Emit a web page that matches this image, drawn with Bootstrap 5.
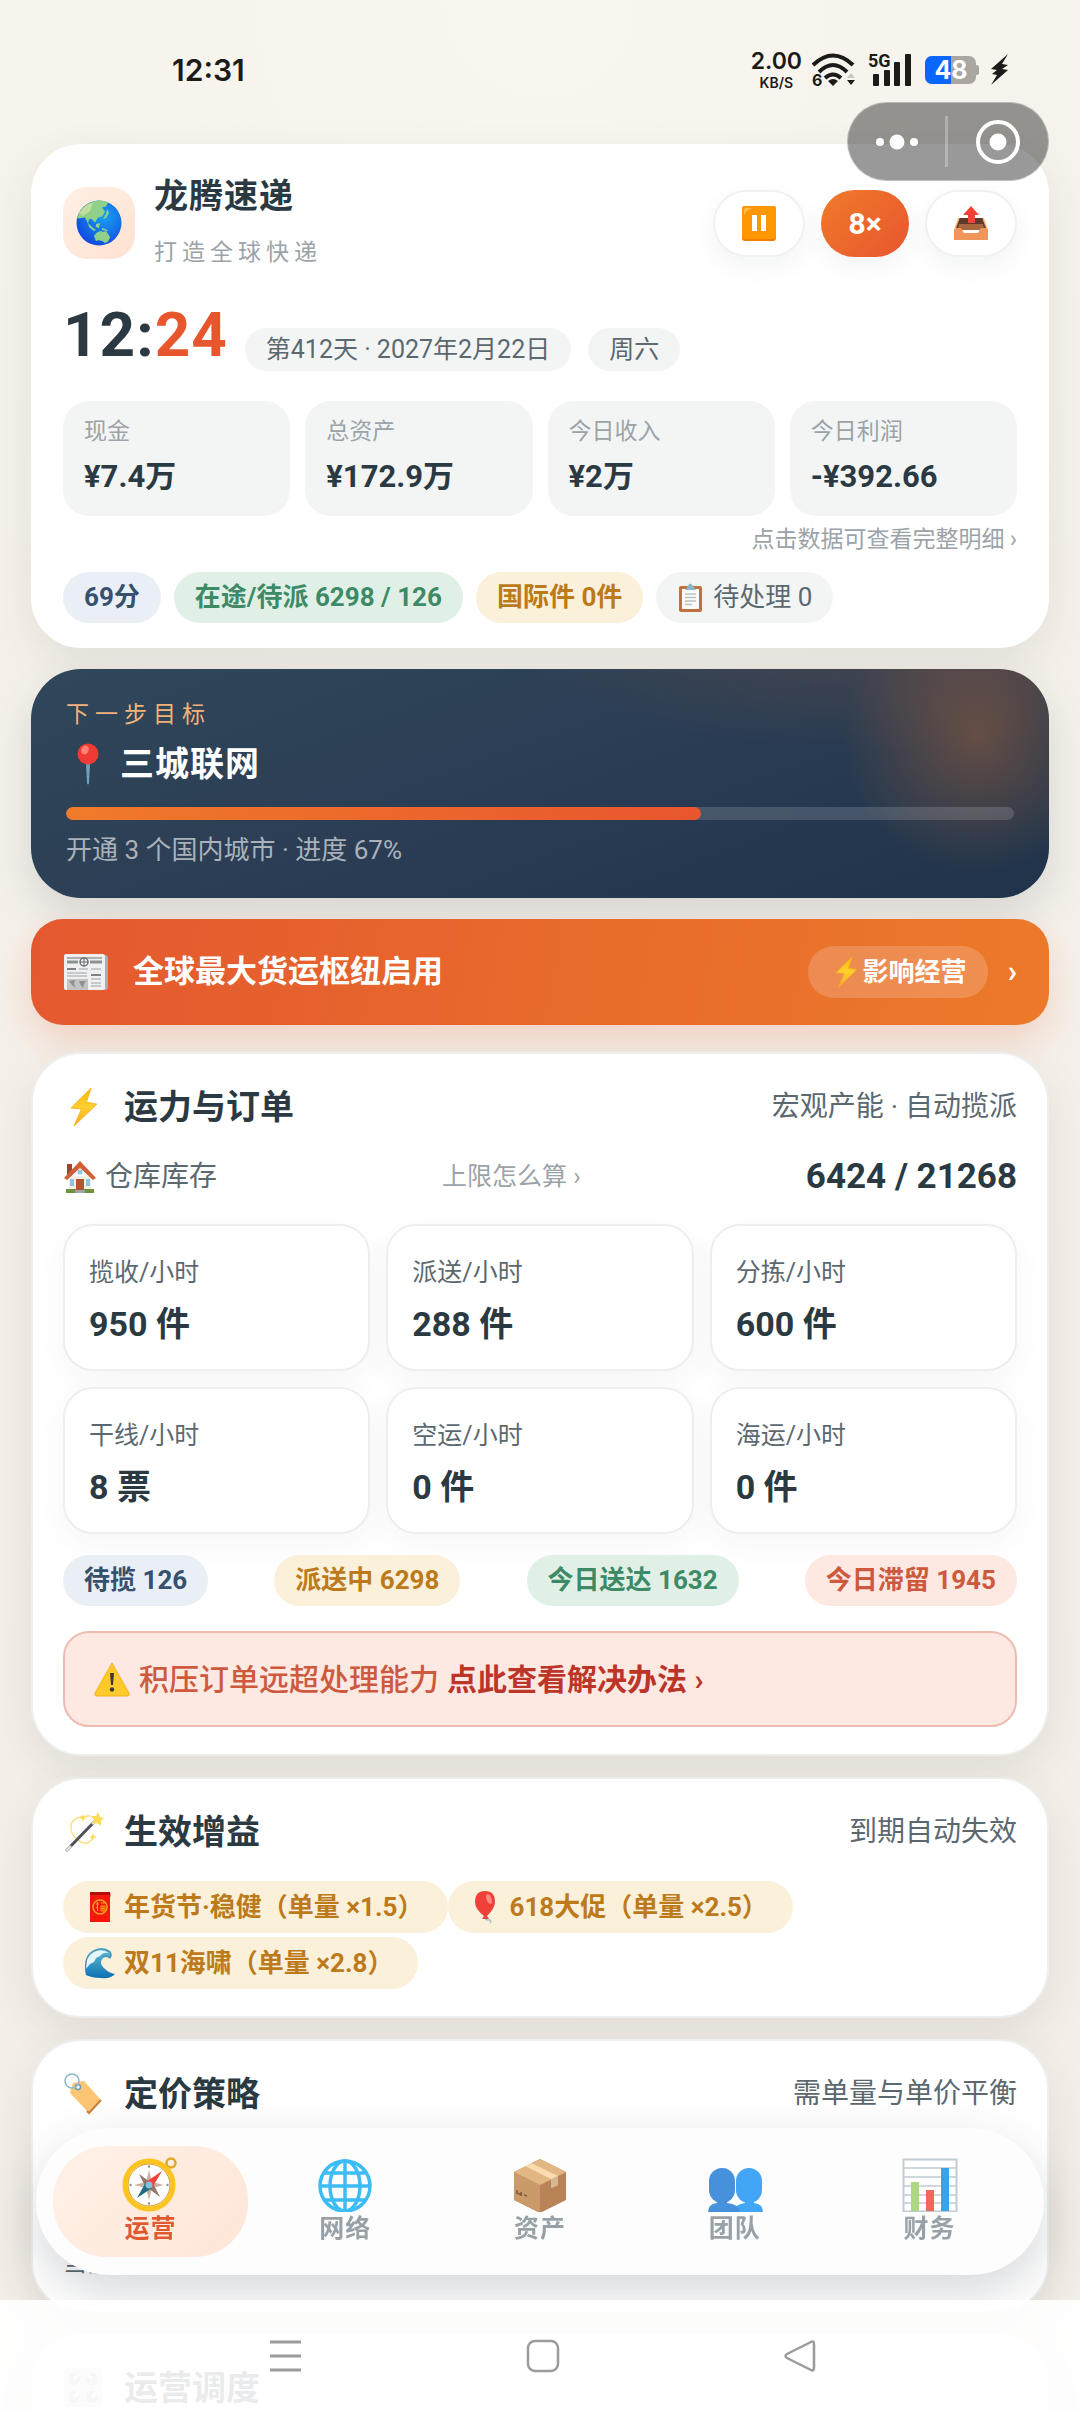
<!DOCTYPE html>
<html lang="zh-CN">
<head>
<meta charset="utf-8">
<meta name="viewport" content="width=device-width, initial-scale=1">
<title>龙腾速递</title>
<link href="https://cdn.jsdelivr.net/npm/bootstrap@5.3.0/dist/css/bootstrap.min.css" rel="stylesheet">
<style>
:root{--ink:#2b3a42;--sub:#5c6870;--mute:#9ba3a9;--or1:#f07a2a;--or2:#e8562e}
body{font-family:Roboto,"Noto Sans CJK SC",sans-serif;color:var(--ink);height:100vh;overflow:hidden;
 background:radial-gradient(circle at 50% 0,#f9f6ef 0,#f5f1ea 38%,#f3eee7 100%)}
button,a{font-family:inherit}
svg{display:block;flex:none}
/* status bar */
.statusbar{height:144px;padding:48px 70px 0 172px;color:#1b1b19;font-family:Inter,sans-serif}
.status-icons{gap:10px}
.clock{font-size:30px;line-height:44px;font-weight:600}
.net-rate{font-size:23px;line-height:26px;font-weight:600}
.net-rate small{font-size:14px;line-height:18px;font-weight:600}
.capsule{top:102px;right:31px;width:202px;height:79px;border-radius:40px;background:rgba(0,0,0,.4);border:1px solid rgba(255,255,255,.35);z-index:5}
.capsule button{background:none;border:0;padding:0}
.capsule button:first-child{width:97px}
.capsule button:last-child{width:100px}
.capsule i{width:3px;height:51px;background:rgba(255,255,255,.28)}
/* panels */
main{padding:0 31px;gap:21px}
.panel{background:#fff;border-radius:50px;box-shadow:0 16px 44px rgba(70,70,55,.1);padding:22px 32px 25px}
.panel.lined{border:2px solid #edefee;padding:26px 30px 27px}
.logo-tile{width:72px;height:72px;border-radius:24px;background:linear-gradient(135deg,#fff0e5,#ffe2d2)}
.brand-box{margin-left:19px}
.brand-name{font-size:34px;line-height:60px;letter-spacing:1px;font-weight:700;margin:0}
.brand-sub{font-size:23px;line-height:54px;letter-spacing:5px;color:var(--mute)}
.ctl{height:67px;width:92px;border-radius:34px;border:2px solid #f0f2f1;background:#fff;box-shadow:0 10px 24px rgba(50,60,65,.06)}
.ctl.speed{width:88px;border:0;color:#fff;background:linear-gradient(135deg,var(--or1),var(--or2));font-size:30px;font-weight:700}
.clock-row{margin-top:19px;gap:17px}
.game-time{font-size:62px;line-height:72px;font-weight:700;letter-spacing:1px}
.game-time span{color:var(--or2)}
.soft-pill{font-size:25px;line-height:43px;padding:0 21px;border-radius:22px;background:#f3f5f5;color:var(--sub)}
.stat{background:#f3f5f5;border:0;border-radius:26px;padding:15px 21px 17px;text-align:left;color:var(--ink)}
.stat span{display:block;font-size:23px;line-height:31px;color:var(--mute)}
.stat b{display:block;font-size:31px;line-height:44px;margin-top:8px}
.stat-row{gap:15px;margin-top:30px}
.g16{gap:16px}
.hint{font-size:23px;line-height:32px;color:var(--mute);text-decoration:none}
.chip-row{margin-top:16px;gap:13px}
.chip{display:inline-flex;align-items:center;gap:8px;font-size:26px;line-height:51px;padding:0 21px;border-radius:26px;font-weight:700;white-space:nowrap}
.c-blue{background:#e9eff5;color:#36506e}.c-green{background:#e1f0e6;color:#3d8a67}
.c-gold{background:#fbf0da;color:#bc7a1a}.c-red{background:#fde8e2;color:#cd593f}
.c-gray{background:#f3f5f5;color:var(--sub);font-weight:400}
/* goal */
.goal{border-radius:50px;padding:30px 35px 31px;color:#fff;box-shadow:0 16px 44px rgba(50,65,80,.16);
 background:radial-gradient(circle at 93% 30%,rgba(240,122,42,.3) 0,rgba(240,122,42,0) 135px),radial-gradient(ellipse at 85% -20%,rgba(240,122,42,.16) 0,rgba(240,122,42,0) 400px),linear-gradient(160deg,#30475a 0,#2b3d54 50%,#20334a 100%)}
.goal-tag{font-size:23px;line-height:32px;letter-spacing:6px;color:#f3b37a}
.goal-title{font-size:34px;line-height:46px;letter-spacing:1px;font-weight:700;margin:10px 0 20px;gap:20px;padding-left:10px}
.goal .progress{height:13px;border-radius:7px;background:rgba(255,255,255,.15)}
.goal .progress-bar{border-radius:7px;background:linear-gradient(90deg,var(--or1),var(--or2))}
.goal-note{font-size:26px;line-height:34px;margin-top:13px;color:#a9b2bb}
/* news */
.news{height:106px;border:0;border-radius:32px;padding:0 32px;margin-bottom:6px;color:#fff;text-align:left;font-size:31px;font-weight:700;
 background:linear-gradient(100deg,#e4582f,#ec7a2a);box-shadow:0 16px 36px rgba(232,86,46,.2)}
.news-title{margin-left:24px}
.news-arrow{margin-left:20px}
.tagpill{font-size:26px;line-height:52px;padding:0 21px;border-radius:26px;background:rgba(255,255,255,.18)}
/* sections */
.sec-title{font-size:34px;line-height:54px;font-weight:700;margin:0;gap:20px}
.sec-title svg{width:41px}
.sec-note{font-size:28px;line-height:54px;color:var(--sub)}
.wh{font-size:28px;line-height:46px;color:var(--sub);margin-top:20px}
.wh b{font-size:35px;color:var(--ink)}
.wh a{font-size:25px}
.wh-name{gap:8px}
.tile-grid{display:grid;grid-template-columns:repeat(3,1fr);gap:16px;margin-top:24px}
.tile{border:2px solid #edefef;border-radius:30px;background:#fff;padding:25px 24px 20px;box-shadow:0 10px 30px rgba(50,70,65,.05)}
.tile span{display:block;font-size:25px;line-height:44px;color:var(--sub)}
.tile b{display:block;font-size:34px;line-height:50px;margin-top:4px}
.flow-row{margin:21px 0 25px}
.warn-btn{height:96px;border:2px solid #ecbcb1;border-radius:26px;background:#fde8e2;color:#cd593f;font-size:30px;font-weight:500;text-align:left;padding:0 28px;gap:8px}
.warn-btn b{color:#bb3528}
.buffs{margin-top:22px;row-gap:4px}
.buffs .chip{line-height:52px;padding-right:25px}
.price{min-height:273px}
.price p{font-size:24px;line-height:40px;color:var(--sub);margin:0}
/* tab bar */
.tabs{left:36px;right:36px;bottom:137px;height:147px;border-radius:74px;background:#fdfdfd;padding:18px 17px;
 box-shadow:0 18px 50px rgba(50,60,75,.2);z-index:3}
.tabs a{flex:1;border-radius:54px;color:#98a1a7;text-decoration:none;font-weight:700;font-size:25px;line-height:34px;letter-spacing:1px;padding-top:10px}
.tabs a.on{background:linear-gradient(135deg,#fff1e7,#ffe6d8);color:#e0592f}
.sysnav{height:112px;background:rgba(255,255,255,.9);z-index:4;padding:0 12px 0 18px}
.sysnav button{border:0;background:none;width:257px;height:112px;padding:0}
</style>
</head>
<body>
<!-- shared symbols -->
<svg width="0" height="0" class="position-absolute" aria-hidden="true"><defs>
<linearGradient id="gBolt" x1="0" y1="0" x2="0" y2="1"><stop offset="0" stop-color="#feb804"/><stop offset=".5" stop-color="#fdd02e"/><stop offset="1" stop-color="#f9a825"/></linearGradient>
<radialGradient id="gSea" cx=".62" cy=".35" r=".7"><stop offset="0" stop-color="#18a2f2"/><stop offset="1" stop-color="#1148e0"/></radialGradient>
<linearGradient id="gWave" x1="0" y1="0" x2="0" y2="1"><stop offset="0" stop-color="#5fc3d8"/><stop offset="1" stop-color="#0f6fb3"/></linearGradient>
<symbol id="bolt" viewBox="0 0 40 42"><path d="M28 1 7 22l11 1-8 18 24-23-11-2z" fill="url(#gBolt)" stroke="#f9b31c" stroke-width="1"/></symbol>
</defs></svg>

<header class="statusbar d-flex justify-content-between align-items-start">
  <span class="clock">12:31</span>
  <div class="status-icons d-flex align-items-center">
    <div class="net-rate text-center d-flex flex-column"><span>2.00</span><small>KB/S</small></div>
    <svg width="46" height="44" viewBox="0 -4 46 44"><g fill="none" stroke="#1b1b19" stroke-width="4"><path d="M1 13Q21-6 41 13"/><path d="M7 20Q21 6 35 20"/><path d="M13 26Q21 19 29 26"/></g><path d="M16 29q5-4 10 0l-5 5z" fill="#1b1b19"/><text x="0" y="34" font-family="Inter" font-size="16" font-weight="700" fill="#1b1b19">6</text><path d="m35 26 4-5 4 5z" fill="#c9c7c0"/><path d="m35 28 4 5 4-5z" fill="#1b1b19"/></svg>
    <svg width="46" height="44" viewBox="0 -4 46 44" fill="#1b1b19"><text x="0" y="15" font-family="Roboto" font-size="18" font-weight="700">5G</text><rect x="5" y="22" width="6" height="12" rx="1"/><rect x="16" y="18" width="6" height="16" rx="1"/><rect x="26" y="10" width="6" height="24" rx="1"/><rect x="37" y="2" width="6" height="32" rx="1"/></svg>
    <svg width="56" height="44" viewBox="0 -4 56 44"><rect x="1" y="4" width="51" height="28" rx="7" fill="#a8a7a1"/><path d="M8 4h19v28H8a7 7 0 0 1-7-7V11a7 7 0 0 1 7-7z" fill="#0a66ff"/><path d="M52 13q3 0 3 2v6q0 2-3 2z" fill="#a8a7a1"/><text x="27" y="27" text-anchor="middle" font-family="Inter" font-size="25" font-weight="700" fill="#fff">48</text></svg>
    <svg width="20" height="44" viewBox="0 -4 20 44"><path d="M18 2 1 17l6 1-5 4 5 1-6 10 17-15-6-1 6-4-6-1z" fill="#1b1b19"/></svg>
  </div>
</header>

<div class="capsule position-absolute d-flex align-items-center">
  <button aria-label="更多"><svg class="mx-auto" width="46" height="18" viewBox="0 0 46 18" fill="#fff"><circle cx="6" cy="9" r="4"/><circle cx="23" cy="9" r="7.5"/><circle cx="40" cy="9" r="4"/></svg></button>
  <i></i>
  <button aria-label="关闭"><svg class="mx-auto" width="46" height="46" viewBox="0 0 46 46"><circle cx="23" cy="23" r="20" fill="none" stroke="#fff" stroke-width="4"/><circle cx="23" cy="23" r="8.5" fill="#fff"/></svg></button>
</div>

<main class="d-flex flex-column">
  <section class="panel">
    <div class="d-flex align-items-center">
      <div class="logo-tile d-flex align-items-center justify-content-center">
        <svg width="46" height="46" viewBox="0 0 46 46"><circle cx="23" cy="23" r="22.5" fill="url(#gSea)"/><g fill="#8fd18a"><path d="M3 13Q10 1 23 .5q6 0 9 2l-2 4-4 1 3 4-3 5-4 1-3 5-4-4-2 1-1 4-3-6-7 1Q1 18 3 13z"/><path d="m31 9 2 4-3 5-3 1 3-5zM12 23l4 4 4 3-2 1-5-4zM20 24l4-1-1 5-3-1zM26 28l6 2-1 1-5-1zM18 36q2-4 7-5l2 1 3-1 4 6q-1 5-5 6-4-4-9-2z"/><path d="M3 13q6-9 14-10l-3 8-7 5z" fill="#c3dd9a"/></g></svg>
      </div>
      <div class="brand-box"><h1 class="brand-name">龙腾速递</h1><div class="brand-sub">打造全球快递</div></div>
      <div class="ms-auto d-flex g16">
        <button class="ctl d-flex align-items-center justify-content-center" aria-label="暂停"><svg width="34" height="35" viewBox="0 0 34 35"><rect width="34" height="35" rx="3" fill="#f57c00"/><rect width="34" height="33" rx="3" fill="#ff9800"/><path d="M2 10V5q0-3 3-3h6Q3 4 2 10z" fill="#ffbd52"/><path d="M10 9h5v16h-5zM19 9h5v16h-5z" fill="#fff"/></svg></button>
        <button class="ctl speed">8×</button>
        <button class="ctl d-flex align-items-center justify-content-center" aria-label="导出"><svg width="34" height="36" viewBox="0 0 34 36"><path d="M5 13h24l4 11H1z" fill="#5d3a2b"/><path d="M5 19h24l1 6H4z" fill="#a8663f"/><path d="M0 25q0-2 2-2h5l3 5h14l3-5h5q2 0 2 2v10H0z" fill="#f0965a"/><path d="M5 13 1 24M29 13l4 11" stroke="#f5b06f" stroke-width="1.5"/><path d="M17 1 9 10h5v8h7v-8h4z" fill="#f44336"/></svg></button>
      </div>
    </div>
    <div class="clock-row d-flex align-items-end">
      <div class="game-time">12:<span>24</span></div>
      <span class="soft-pill">第412天 · 2027年2月22日</span>
      <span class="soft-pill">周六</span>
    </div>
    <div class="stat-row d-flex">
      <button class="stat flex-fill w-25"><span>现金</span><b>¥7.4万</b></button>
      <button class="stat flex-fill w-25"><span>总资产</span><b>¥172.9万</b></button>
      <button class="stat flex-fill w-25"><span>今日收入</span><b>¥2万</b></button>
      <button class="stat flex-fill w-25"><span>今日利润</span><b>-¥392.66</b></button>
    </div>
    <div class="d-flex justify-content-end mt-2"><a class="hint" href="#">点击数据可查看完整明细 ›</a></div>
    <div class="chip-row d-flex">
      <span class="chip c-blue">69分</span><span class="chip c-green">在途/待派 6298 / 126</span><span class="chip c-gold">国际件 0件</span>
      <span class="chip c-gray"><svg width="28" height="30" viewBox="0 0 28 30"><rect x="2" y="3" width="23" height="26" rx="2" fill="#bf7240"/><path d="M5 6h17v20H5z" fill="#fafafa"/><path d="M8 7 11 3q2-5 5 0l3 4z" fill="#8ab4c8"/><path d="M8 11h11M8 14.500h11M8 18h11M8 21.500h7" stroke="#b9c2c8" stroke-width="1.300"/></svg>待处理 0</span>
    </div>
  </section>

  <section class="goal">
    <div class="goal-tag">下一步目标</div>
    <h2 class="goal-title d-flex align-items-center"><svg width="24" height="42" viewBox="0 0 24 42"><path d="M10 20h4l-1 20q-1 3-2 0z" fill="#6fa3b8"/><circle cx="12" cy="11" r="10.500" fill="#f03a34"/><ellipse cx="9" cy="7" rx="3.500" ry="4.500" fill="#ff8272" transform="rotate(25 9 7)"/></svg>三城联网</h2>
    <div class="progress" role="progressbar" aria-label="目标进度" aria-valuenow="67" aria-valuemin="0" aria-valuemax="100"><div class="progress-bar" style="width:67%"></div></div>
    <div class="goal-note">开通 3 个国内城市 · 进度 67%</div>
  </section>

  <button class="news d-flex align-items-center">
    <svg width="46" height="38" viewBox="0 0 46 38"><rect x="4" y="2" width="41" height="35" rx="3" fill="#a9adb0"/><rect x="1" y="1" width="41" height="36" rx="2" fill="#f0f0f0"/><path d="M4 5h35" stroke="#6b7073"/><path d="M4 9h11M27 9h12" stroke="#8c9194" stroke-width="3"/><circle cx="21" cy="9" r="4" fill="none" stroke="#6b7073" stroke-width="1.500"/><path d="M17 9h8M21 5v8" stroke="#6b7073"/><path d="M4 16h9M28 22h10" stroke="#7d8285" stroke-width="2"/><path d="M4 20h20M4 23h20M16 16h9M28 16h10M28 26h10M28 30h10M28 33h10" stroke="#b8bcbe" stroke-width="1.500"/><rect x="4" y="26" width="21" height="11" fill="#c3c3c3"/><path d="m6 28 6-1-1 4 2 4-4-3zM16 28h7l-2 3-1 4-3-4z" fill="#909090"/></svg>
    <span class="news-title">全球最大货运枢纽启用</span>
    <span class="tagpill ms-auto d-flex align-items-center"><svg width="34" height="32"><use href="#bolt"/></svg>影响经营</span>
    <span class="news-arrow">›</span>
  </button>

  <section class="panel lined">
    <div class="d-flex justify-content-between"><h2 class="sec-title d-flex align-items-center"><svg height="40"><use href="#bolt"/></svg>运力与订单</h2><span class="sec-note">宏观产能 · 自动揽派</span></div>
    <div class="wh d-flex justify-content-between align-items-center">
      <span class="wh-name d-flex align-items-center"><svg width="34" height="34" viewBox="0 0 34 34"><path d="M4 4h5v12H4z" fill="#a5442c"/><path d="M6 16h22v14H6z" fill="#f3efe6"/><path d="M3 29h10v4H3zM21 29h10v4H21z" fill="#71903c"/><path d="M13 19h8v11h-8z" fill="#b5552f"/><path d="M12 30h10v3H12z" fill="#a0a4a8"/><path d="M7 19h4v7H7zM23 19h4v7h-4z" fill="#8fc7e0"/><path d="M17 1 1 18l3 2 13-12 13 12 3-2z" fill="#d35f38"/><circle cx="17" cy="12" r="2.500" fill="#8fc7e0"/></svg>仓库库存</span>
      <a class="hint" href="#">上限怎么算 ›</a><b>6424 / 21268</b>
    </div>
    <div class="tile-grid">
      <div class="tile"><span>揽收/小时</span><b>950 件</b></div>
      <div class="tile"><span>派送/小时</span><b>288 件</b></div>
      <div class="tile"><span>分拣/小时</span><b>600 件</b></div>
      <div class="tile"><span>干线/小时</span><b>8 票</b></div>
      <div class="tile"><span>空运/小时</span><b>0 件</b></div>
      <div class="tile"><span>海运/小时</span><b>0 件</b></div>
    </div>
    <div class="flow-row d-flex justify-content-between">
      <span class="chip c-blue">待揽 126</span><span class="chip c-gold">派送中 6298</span><span class="chip c-green">今日送达 1632</span><span class="chip c-red">今日滞留 1945</span>
    </div>
    <button class="warn-btn w-100 d-flex align-items-center"><svg width="38" height="36" viewBox="0 0 38 36"><path d="M19 2 36 32q1 3-2 3H4q-3 0-2-3z" fill="#fdc92b" stroke="#f5b21a"/><path d="M17 12h4l-1 12h-2z" fill="#3a3a3a"/><circle cx="19" cy="28.500" r="2.200" fill="#3a3a3a"/></svg><span>积压订单远超处理能力</span><b>点此查看解决办法 ›</b></button>
  </section>

  <section class="panel lined">
    <div class="d-flex justify-content-between"><h2 class="sec-title d-flex align-items-center"><svg height="42" viewBox="0 0 41 42"><path d="M28 5Q6 5 8 18q1 8 10 13 8 4 12-5" fill="none" stroke="#fbe08a" stroke-width="1.500"/><path d="M3 40 34 8" stroke="#4f5357" stroke-width="3"/><path d="m3 40 5-5M29 13l5-5" stroke="#d8dadc" stroke-width="3"/><path d="m35 1 2 5 4 1-3 3 0 5-4-3-4 1 1-4-3-4 5 0zM20 3l1 3 3 1-3 1-1 3-1-3-3-1 3-1zM30 22l1 3 3 1-3 1-1 3-1-3-3-1 3-1z" fill="#fbdc55"/></svg>生效增益</h2><span class="sec-note">到期自动失效</span></div>
    <div class="buffs d-flex flex-wrap">
      <span class="chip c-gold"><svg width="32" height="32" viewBox="0 0 32 32"><path d="M6 1h20v30H6z" fill="#f5170b"/><path d="M6 1h20l1 6-1-3H6z" fill="#b10e08"/><circle cx="16" cy="16" r="7" fill="none" stroke="#f8a01c" stroke-width="1.500"/><path d="M12 13h3m-1.500-2v9M12 17l2-2M17 12h4M17 15h4v5h-4zM17 17.500h4M19 15v5" stroke="#f8a01c" fill="none"/></svg>年货节·稳健（单量 ×1.5）</span>
      <span class="chip c-gold"><svg width="32" height="34" viewBox="0 0 32 34"><path d="M16 26q-1 4 4 4 3 0 1 3" fill="none" stroke="#a9c4d0" stroke-width="1.500"/><path d="M16 1q10 0 10 11 0 6-8 14l2 3h-7l2-3Q6 19 6 12 6 1 16 1z" fill="#f0403a"/><ellipse cx="20" cy="9" rx="2.500" ry="5" fill="#ff8a80" transform="rotate(-20 20 9)"/></svg>618大促（单量 ×2.5）</span>
      <span class="chip c-gold"><svg width="32" height="32" viewBox="0 0 32 32"><path d="M2 28Q-2 12 9 4q9-6 17 0 3 3 0 7-4-2-7 0-5 5 2 11 4 4 10 5-4 5-14 4-9 0-15-3z" fill="url(#gWave)"/><path d="M2 22Q1 10 10 5q8-4 15 1-6-1-9 3l-4 2-2 4-4 2z" fill="#e7f6fb"/><path d="M2 22Q0 9 10 3.500q9-4 16 1.500 2 3 0 6-3-3-7-1" fill="none" stroke="#4a91b8" stroke-width="1.200"/></svg>双11海啸（单量 ×2.8）</span>
    </div>
  </section>

  <section class="panel lined price d-flex flex-column">
    <div class="d-flex justify-content-between"><h2 class="sec-title d-flex align-items-center"><svg height="42" viewBox="0 0 41 42"><path d="m10 10 11-2 17 19-12 13L7 20z" fill="#fbc573"/><path d="M38 27 26 40l-2-2" fill="none" stroke="#c9803c" stroke-width="2"/><circle cx="15" cy="14" r="2.500" fill="#fff" stroke="#6c9db5" stroke-width="1.500"/><circle cx="9" cy="8" r="7" fill="none" stroke="#8fb6c8" stroke-width="1.500"/></svg>定价策略</h2><span class="sec-note">需单量与单价平衡</span></div>
    <p class="mt-auto">当前：市场均价附近，单量与口碑保持平稳</p>
  </section>

  <section class="panel lined">
    <h2 class="sec-title d-flex align-items-center"><svg height="42" viewBox="0 0 41 42"><rect x="1" y="1" width="38" height="39" rx="3" fill="#dfe2e5"/><g fill="#a4adb3"><circle cx="11" cy="12" r="6"/><circle cx="29" cy="12" r="6"/><circle cx="11" cy="30" r="6"/><circle cx="29" cy="30" r="6"/></g><path d="m11 12 4-4M29 12l-4-4M11 30l4-4M29 30l4-4" stroke="#fff" stroke-width="3"/></svg>运营调度</h2>
  </section>
</main>

<nav class="tabs position-fixed d-flex">
  <a class="on d-flex flex-column align-items-center" href="#"><svg width="56" height="56" viewBox="0 0 56 56"><circle cx="49" cy="7" r="4.500" fill="none" stroke="#e0a728" stroke-width="2.500"/><circle cx="27" cy="29" r="24" fill="#fff" stroke="#fcc421" stroke-width="5"/><circle cx="27" cy="29" r="21" fill="none" stroke="#d99a1b" stroke-width="1"/><path d="m27 14 3 12 12 3-12 3-3 12-3-12-12-3 12-3z" fill="#c9b2a2"/><path d="m17 18 11 8-4 6zM38 41l-12-9 5-5z" fill="#95786a"/><path d="M40 15 24 26l6 6z" fill="#f0413a"/><path d="M15 42l9-16 6 6z" fill="#1f6c80"/><circle cx="27" cy="29" r="3.500" fill="#7fc4dc"/><g fill="#a08a7c"><circle cx="27" cy="10.500" r="1.200"/><circle cx="27" cy="47.500" r="1.200"/><circle cx="8.500" cy="29" r="1.200"/><circle cx="45.500" cy="29" r="1.200"/></g></svg>运营</a>
  <a class="d-flex flex-column align-items-center" href="#"><svg width="56" height="56" viewBox="0 0 56 56" fill="none" stroke="#3cbcf5" stroke-width="3.500"><circle cx="28" cy="30" r="25"/><path d="M28 5v50M3 30h50M8 17h40M8 44h40"/><ellipse cx="28" cy="30" rx="15" ry="25"/></svg>网络</a>
  <a class="d-flex flex-column align-items-center" href="#"><svg width="56" height="56" viewBox="0 0 56 56"><path d="M28 3 54 16v28L28 57 2 44V16z" fill="#b98358"/><path d="M2 16 28 29v27L2 44z" fill="#cb9a69"/><path d="M28 3 54 16 28 29 2 16z" fill="#e2b783"/><path d="m13 10 6-3 27 13v9l-7 3v-9z" fill="#fbdcae"/><path d="m39 23 7-3v9l-7 3z" fill="#d9b591"/><path d="m5 37 5 2m2 0 3 1M5 34v4m4-2v4" stroke="#80583a" stroke-width="1.500"/></svg>资产</a>
  <a class="d-flex flex-column align-items-center" href="#"><svg width="56" height="56" viewBox="0 0 56 56"><rect x="29" y="12" width="26" height="35" rx="13" fill="#42a5f5"/><path d="M38 40h9v7q9 1 9 9H26q2-8 12-9z" fill="#42a5f5"/><rect x="2" y="12" width="26" height="35" rx="13" fill="#4790db"/><path d="M10 42h10v5q12 1 13 9H1q0-8 9-9z" fill="#4790db"/></svg>团队</a>
  <a class="d-flex flex-column align-items-center" href="#"><svg width="56" height="56" viewBox="0 0 56 56"><rect x="1.500" y="3.500" width="53" height="52" fill="#fff" stroke="#c0cbd2" stroke-width="2"/><path d="M2 12h52M2 21h52M2 30h52M2 39h52M2 47h52" stroke="#c0cbd2" stroke-width="1.500"/><path d="M9 26h8v29H9z" fill="#aed581"/><path d="M24 34h8v21h-8z" fill="#f4665c"/><path d="M39 12h8v43h-8z" fill="#35a4ea"/></svg>财务</a>
</nav>

<footer class="sysnav position-fixed bottom-0 start-0 end-0 d-flex justify-content-center">
  <button aria-label="最近任务"><svg class="mx-auto" width="32" height="34" viewBox="0 0 32 34" stroke="#9b9b9b" stroke-width="3"><path d="M0 3h31M0 17h31M0 31h31"/></svg></button>
  <button aria-label="主屏幕"><svg class="mx-auto" width="34" height="34" viewBox="0 0 34 34" fill="none" stroke="#9b9b9b" stroke-width="2.500"><rect x="2" y="2" width="30" height="30" rx="7"/></svg></button>
  <button aria-label="返回"><svg class="mx-auto" width="34" height="34" viewBox="0 0 34 34" fill="none" stroke="#9b9b9b" stroke-width="2.500" stroke-linejoin="round"><path d="M29 2.500 4 15q-3 2 0 4l25 12.500q2 0 2-3V5q0-3-2-2.500z"/></svg></button>
</footer>
<script src="https://cdn.jsdelivr.net/npm/bootstrap@5.3.0/dist/js/bootstrap.bundle.min.js"></script>
</body>
</html>
